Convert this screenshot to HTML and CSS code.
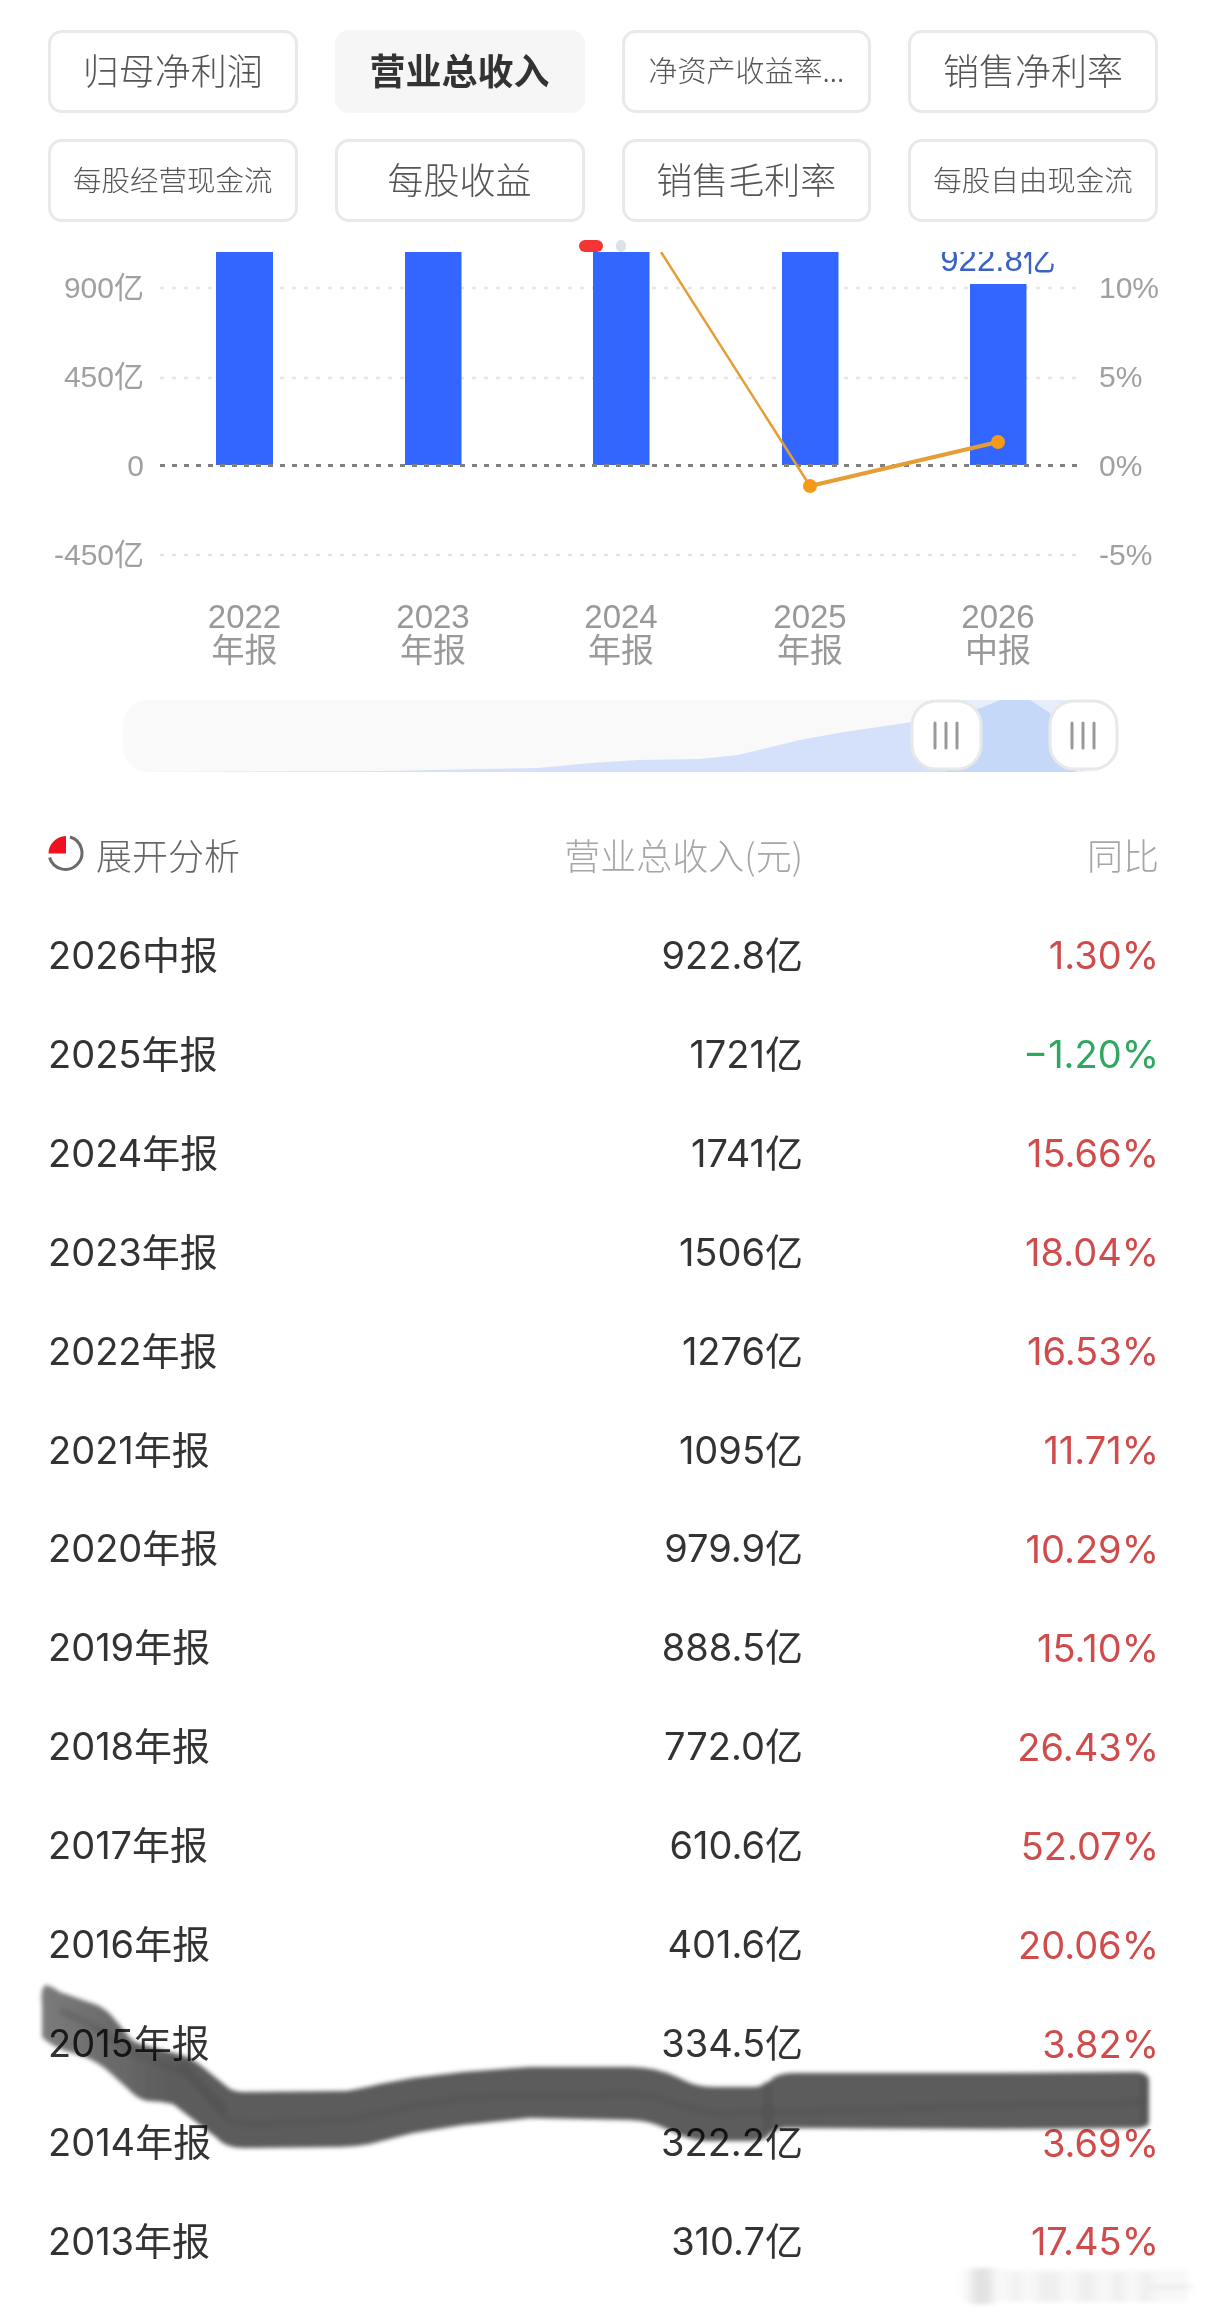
FILE: index.html
```html
<!DOCTYPE html>
<html>
	<head>
		<meta charset="UTF-8">
		<title>营业总收入</title>
		<link rel="stylesheet" href="styles.css">
	</head>
	<body>
		<div class="page">
			<div class="tabs">
				<div class="tab">归母净利润</div>
				<div class="tab active">营业总收入</div>
				<div class="tab tiny">净资产收益率...</div>
				<div class="tab">销售净利率</div>
				<div class="tab small">每股经营现金流</div>
				<div class="tab">每股收益</div>
				<div class="tab">销售毛利率</div>
				<div class="tab small">每股自由现金流</div>
			</div>

			<!-- 图表:viewBox 用页面坐标 -->
			<svg class="chart" viewBox="0 230 1206 460">
				<defs>
					<clipPath id="plot"><rect x="0" y="252" width="1206" height="400"></rect></clipPath>
				</defs>
				<g class="grid">
					<line x1="160" y1="288" x2="1081" y2="288"></line>
					<line x1="160" y1="378" x2="1081" y2="378"></line>
					<line x1="160" y1="555" x2="1081" y2="555"></line>
				</g>
				<g class="bars">
					<rect x="216" y="252" width="57" height="213"></rect>
					<rect x="405" y="252" width="56.5" height="213"></rect>
					<rect x="593" y="252" width="56.5" height="213"></rect>
					<rect x="782" y="252" width="56.5" height="213"></rect>
					<rect x="970" y="284" width="56.5" height="181"></rect>
				</g>
				<line class="zero" x1="160" y1="465.5" x2="1081" y2="465.5"></line>
				<rect class="legend-on" x="579" y="240" width="24" height="12" rx="6"></rect>
				<rect class="legend-off" x="616" y="240" width="10" height="12" rx="5"></rect>
				<g clip-path="url(#plot)">
					<text class="bar-label" x="998" y="271">922.8亿</text>
					<polyline class="trend" points="661,252 810,486"></polyline>
					<polyline class="trend thick" points="810,486 998,442"></polyline>
					<circle class="dot" cx="810" cy="486" r="7"></circle>
					<circle class="dot" cx="998" cy="442" r="7"></circle>
				</g>
				<g class="axis left">
					<text x="144" y="298">900亿</text>
					<text x="144" y="387">450亿</text>
					<text x="144" y="476">0</text>
					<text x="144" y="565">-450亿</text>
				</g>
				<g class="axis right">
					<text x="1099" y="298">10%</text>
					<text x="1099" y="387">5%</text>
					<text x="1099" y="476">0%</text>
					<text x="1099" y="565">-5%</text>
				</g>
				<g class="xaxis">
					<text x="244.5" y="628">2022</text><text x="244.5" y="662">年报</text>
					<text x="433" y="628">2023</text><text x="433" y="662">年报</text>
					<text x="621" y="628">2024</text><text x="621" y="662">年报</text>
					<text x="810" y="628">2025</text><text x="810" y="662">年报</text>
					<text x="998" y="628">2026</text><text x="998" y="662">中报</text>
				</g>
			</svg>

			<svg class="slider" viewBox="0 690 1206 90">
				<rect class="track" x="123" y="700" width="990" height="72" rx="24"></rect>
				<path class="area" d="M138 772 L385 771 L538 768 L592 763 L638 760 L700 759 L738 755 L800 740 L838 733 L912 722 L946 716 L946 772 Z"></path>
				<rect class="window" x="946" y="700" width="138" height="72"></rect>
				<path class="area-on" d="M946 716 L981 708 L1000 700 L1030 700 L1050 713 L1076 772 L946 772 Z"></path>
				<rect class="handle" x="912" y="701" width="69" height="68" rx="24"></rect>
				<rect class="handle" x="1050" y="701" width="67" height="68" rx="24"></rect>
				<g class="grip">
					<line x1="935" y1="723" x2="935" y2="748"></line>
					<line x1="946" y1="723" x2="946" y2="748"></line>
					<line x1="957" y1="723" x2="957" y2="748"></line>
					<line x1="1072" y1="723" x2="1072" y2="748"></line>
					<line x1="1083" y1="723" x2="1083" y2="748"></line>
					<line x1="1094" y1="723" x2="1094" y2="748"></line>
				</g>
			</svg>

			<div class="table">
				<div class="row head">
					<div class="expand">
						<svg class="pie" viewBox="0 0 36 38">
							<path class="pie-ring" d="M22 2 A16.5 16.5 0 1 1 1.6 22.5"></path>
							<path class="pie-red" d="M18 1 L18 18.5 L0.5 18.5 C0.5 9 8 1.5 18 1 Z"></path>
						</svg>
						<span>展开分析</span>
					</div>
					<div class="col-val">营业总收入(元)</div>
					<div class="col-pct">同比</div>
				</div>
				<div class="row"><div>2026中报</div><div class="col-val">922.8亿</div><div class="col-pct up">1.30%</div></div>
				<div class="row"><div>2025年报</div><div class="col-val">1721亿</div><div class="col-pct down">−1.20%</div></div>
				<div class="row"><div>2024年报</div><div class="col-val">1741亿</div><div class="col-pct up">15.66%</div></div>
				<div class="row"><div>2023年报</div><div class="col-val">1506亿</div><div class="col-pct up">18.04%</div></div>
				<div class="row"><div>2022年报</div><div class="col-val">1276亿</div><div class="col-pct up">16.53%</div></div>
				<div class="row"><div>2021年报</div><div class="col-val">1095亿</div><div class="col-pct up">11.71%</div></div>
				<div class="row"><div>2020年报</div><div class="col-val">979.9亿</div><div class="col-pct up">10.29%</div></div>
				<div class="row"><div>2019年报</div><div class="col-val">888.5亿</div><div class="col-pct up">15.10%</div></div>
				<div class="row"><div>2018年报</div><div class="col-val">772.0亿</div><div class="col-pct up">26.43%</div></div>
				<div class="row"><div>2017年报</div><div class="col-val">610.6亿</div><div class="col-pct up">52.07%</div></div>
				<div class="row"><div>2016年报</div><div class="col-val">401.6亿</div><div class="col-pct up">20.06%</div></div>
				<div class="row"><div>2015年报</div><div class="col-val">334.5亿</div><div class="col-pct up">3.82%</div></div>
				<div class="row"><div>2014年报</div><div class="col-val">322.2亿</div><div class="col-pct up">3.69%</div></div>
				<div class="row"><div>2013年报</div><div class="col-val">310.7亿</div><div class="col-pct up">17.45%</div></div>
			</div>

			<!-- 涂抹和水印,盖在表格上面 -->
			<svg class="overlay" viewBox="0 0 1206 2315">
				<defs>
					<filter id="soft"><feGaussianBlur stdDeviation="2"></feGaussianBlur></filter>
					<filter id="fog"><feGaussianBlur stdDeviation="4 2"></feGaussianBlur></filter>
					<linearGradient id="inkfade" gradientUnits="userSpaceOnUse" x1="40" y1="0" x2="170" y2="0">
						<stop offset="0" stop-color="#7c7c7c"></stop>
						<stop offset="1" stop-color="#5c5c5c"></stop>
					</linearGradient>
				</defs>
				<g class="scribble" filter="url(#soft)">
					<path fill="url(#inkfade)" d="M42 2005 Q40 1990 45 1985 Q50 1985 60 1992 L97 2005 Q108 2010 117 2022 L130 2038 Q136 2044 148 2046 L185 2056 Q195 2060 210 2073 L226 2086 Q232 2092 245 2092 L345 2091 Q355 2090 380 2084 L413 2078 L463 2072 L530 2067 L630 2067 Q655 2067 677 2077 L690 2083 Q700 2087 715 2087 L755 2087 Q765 2086 773 2078 Q780 2073 795 2073 L997 2073 L1135 2072 Q1148 2071 1149 2082 L1149 2120 Q1149 2128 1135 2128 L997 2129 L785 2128 Q775 2129 770 2134 Q765 2141 750 2141 L710 2141 Q695 2141 680 2135 L662 2127 Q650 2121 630 2120 L530 2118 L463 2125 L413 2133 L370 2144 Q355 2147 340 2147 L245 2148 Q225 2148 217 2138 L173 2104 Q160 2101 148 2101 Q138 2100 127 2088 L107 2070 Q97 2062 85 2057 L63 2050 Q50 2045 42 2037 Z"></path>
					<path class="seam" d="M60 2010 L100 2030 L130 2052 L190 2075 L228 2120 Q236 2124 260 2124 L350 2120 L413 2106 L463 2098 L630 2094 Q660 2096 680 2106 L720 2114 L765 2112 L1145 2102"></path>
					<path class="seam wide" d="M180 2064 L226 2112 M768 2082 L768 2130 M1144 2076 L1144 2126"></path>
				</g>
				<g class="mark" filter="url(#fog)">
					<rect class="mark-base" x="962" y="2270" width="226" height="32"></rect>
					<rect class="mark-dark" x="972" y="2268" width="20" height="36"></rect>
					<rect x="1012" y="2272" width="8" height="30"></rect>
					<rect x="1038" y="2272" width="22" height="30"></rect>
					<rect x="1078" y="2272" width="18" height="30"></rect>
					<rect x="1112" y="2272" width="12" height="30"></rect>
					<rect x="1140" y="2272" width="12" height="30"></rect>
					<rect x="1140" y="2284" width="50" height="6"></rect>
				</g>
			</svg>
		</div>
	</body>
</html>
```

FILE: styles.css
```css
* {
	box-sizing: border-box;
}

body {
	margin: 0;
	padding: 0;
	background: #fff;
}

.page {
	position: relative;
	width: 1206px;
	height: 2315px;
	overflow: hidden;
	font-family: Inter, "Noto Sans CJK SC", sans-serif;
	color: #333;
}

.tabs {
	display: grid;
	grid-template-columns: repeat(4, 1fr);
	grid-auto-rows: 83px;
	column-gap: 37px;
	row-gap: 26px;
	padding: 30px 48px 0;
}

.tab {
	display: flex;
	align-items: center;
	justify-content: center;
	padding-bottom: 5px;
	border: 3px solid #e9e9e9;
	border-radius: 14px;
	font-family: "Noto Sans CJK SC", sans-serif;
	font-size: 36px;
	font-weight: 300;
	color: #555;
	white-space: nowrap;
}

.tab.small {
	font-size: 28.5px;
}

.tab.tiny {
	font-size: 29px;
}

.tab.active {
	border-color: #f6f6f6;
	background: #f6f6f6;
	font-weight: 700;
	color: #333;
}

.chart {
	display: block;
	width: 1206px;
	height: 460px;
	margin-top: 8px;
	font-family: "Liberation Sans", "Noto Sans CJK SC", sans-serif;
}

.grid line {
	stroke: #e6e6e6;
	stroke-width: 2.5;
	stroke-dasharray: 4 8;
}

.zero {
	stroke: #808080;
	stroke-width: 3;
	stroke-dasharray: 5 7;
}

.bars rect {
	fill: #3366ff;
}

.legend-on {
	fill: #f53535;
}

.legend-off {
	fill: #dde1e8;
}

.bar-label {
	font-size: 33px;
	fill: #3a62c4;
	text-anchor: middle;
}

.trend {
	fill: none;
	stroke: #e59d34;
	stroke-width: 2.5;
}

.trend.thick {
	stroke-width: 4;
}

.dot {
	fill: #f59a18;
}

.axis text {
	font-size: 30px;
	fill: #a0a0a0;
}

.axis.left text {
	text-anchor: end;
}

.xaxis text {
	font-size: 33px;
	fill: #999;
	text-anchor: middle;
}

.slider {
	display: block;
	width: 1206px;
	height: 90px;
}

.track {
	fill: #f9f9f9;
}

.area {
	fill: #d5e1fa;
}

.window {
	fill: #e6eefc;
}

.area-on {
	fill: #c6d8f8;
}

.handle {
	fill: #fff;
	stroke: #e8e8e8;
	stroke-width: 3;
}

.grip line {
	stroke: #999;
	stroke-width: 3;
	stroke-linecap: round;
}

.table {
	margin-top: 25px;
	padding: 0 47px 0 48px;
}

.row {
	display: grid;
	grid-template-columns: 1fr 300px 356px;
	align-items: center;
	height: 98.93px;
	font-size: 38px;
	font-weight: 400;
	white-space: nowrap;
}

.row.head {
	height: 98px;
	font-family: "Noto Sans CJK SC", sans-serif;
	font-size: 36px;
	font-weight: 300;
	color: #666;
}

.expand {
	display: flex;
	align-items: center;
	gap: 12px;
}

.pie {
	width: 36px;
	height: 38px;
}

.pie-ring {
	fill: none;
	stroke: #6a6a6a;
	stroke-width: 3;
}

.pie-red {
	fill: #f01020;
}

.col-val {
	text-align: right;
}

.col-pct {
	text-align: right;
}

.up,
.down {
	padding-top: 6px;
}

.head .col-val,
.head .col-pct {
	color: #a6a6a6;
}

.up {
	color: #d04c4c;
}

.down {
	color: #2ea860;
}

.overlay {
	position: absolute;
	left: 0;
	top: 0;
	width: 1206px;
	height: 2315px;
	pointer-events: none;
}

.scribble {
	mix-blend-mode: multiply;
}

.seam {
	fill: none;
	stroke: #505050;
	stroke-width: 8;
	stroke-opacity: 0.3;
}

.seam.wide {
	stroke-width: 10;
	stroke-opacity: 0.4;
}

.mark rect {
	fill: #efefef;
}

.mark .mark-base {
	fill: #f8f8f8;
}

.mark .mark-dark {
	fill: #e2e2e2;
}
```
